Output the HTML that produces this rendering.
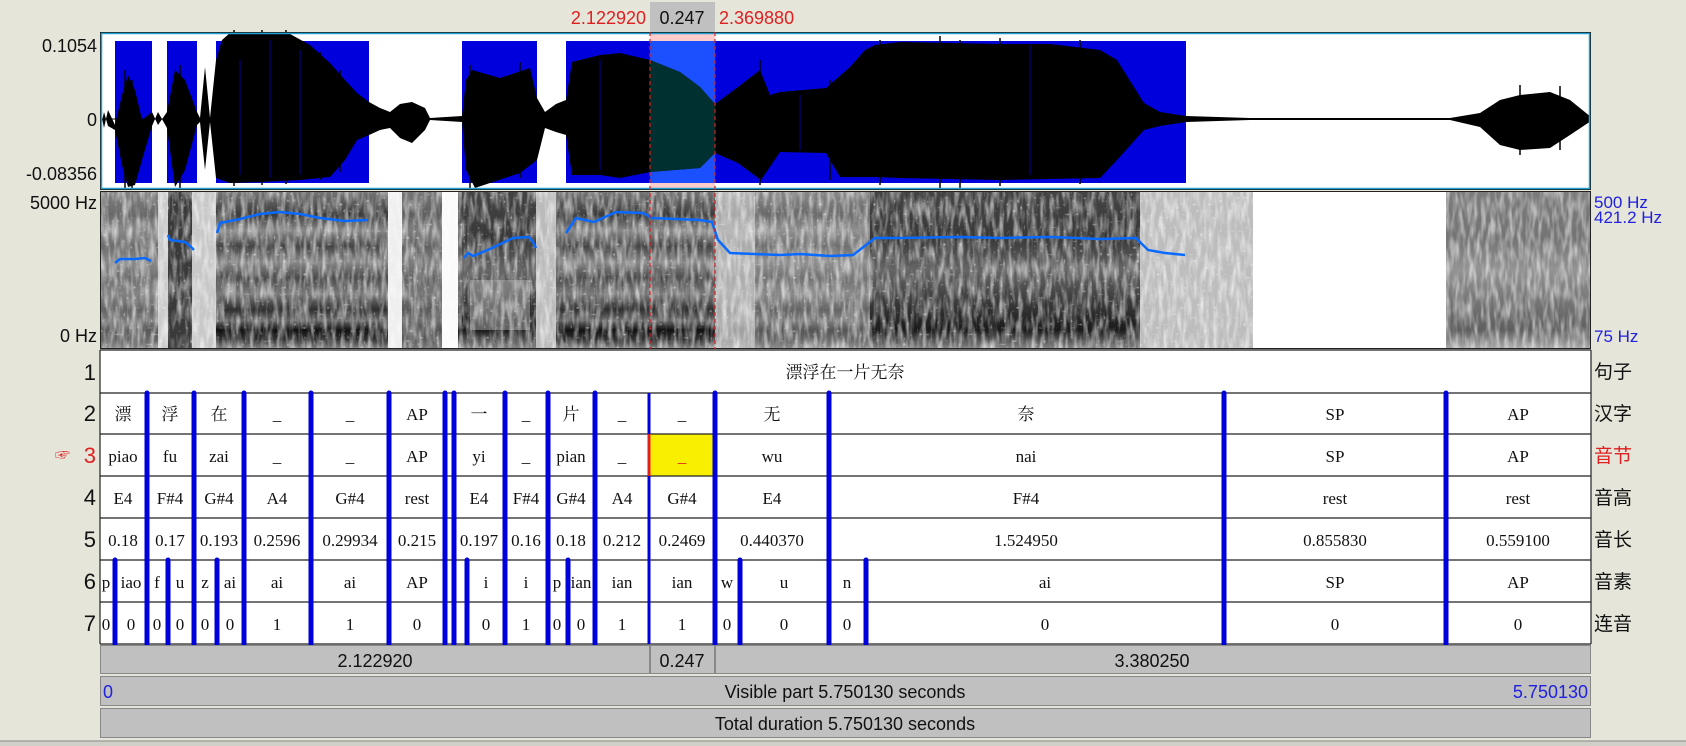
<!DOCTYPE html>
<html><head><meta charset="utf-8"><style>
html,body{margin:0;padding:0;background:#e5e5da;width:1686px;height:746px;overflow:hidden}
svg{display:block}
.s{font-family:"Liberation Sans","Noto Sans CJK SC",sans-serif}
.t{font-family:"Liberation Serif","Noto Serif CJK SC",serif;font-size:17px}
</style></head><body>
<svg width="1686" height="746" viewBox="0 0 1686 746" xmlns="http://www.w3.org/2000/svg">
<defs>
<filter id="n" x="0" y="0" width="100%" height="100%">
<feTurbulence type="fractalNoise" baseFrequency="0.22 0.05" numOctaves="2" seed="3"/>
<feColorMatrix type="matrix" values="0 0 0 0 1  0 0 0 0 1  0 0 0 0 1  0 0 0 2.2 -0.85"/>
</filter>
<filter id="d" x="0" y="0" width="100%" height="100%">
<feTurbulence type="fractalNoise" baseFrequency="0.3 0.3" numOctaves="1" seed="7"/>
<feColorMatrix type="matrix" values="0 0 0 0 1  0 0 0 0 1  0 0 0 0 1  0 0 0 4 -2.6"/>
</filter>
<linearGradient id="bands" x1="0" y1="0" x2="0" y2="1">
<stop offset="0" stop-color="#777"/><stop offset="0.15" stop-color="#3a3a3a"/><stop offset="0.25" stop-color="#888"/>
<stop offset="0.35" stop-color="#444"/><stop offset="0.45" stop-color="#888"/><stop offset="0.55" stop-color="#4a4a4a"/>
<stop offset="0.65" stop-color="#7a7a7a"/><stop offset="0.75" stop-color="#2f2f2f"/><stop offset="0.82" stop-color="#666"/>
<stop offset="0.88" stop-color="#111"/><stop offset="0.94" stop-color="#333"/><stop offset="1" stop-color="#888"/>
</linearGradient>
<linearGradient id="bands2" x1="0" y1="0" x2="0" y2="1">
<stop offset="0" stop-color="#444"/><stop offset="0.3" stop-color="#383838"/><stop offset="0.5" stop-color="#666"/>
<stop offset="0.7" stop-color="#3a3a3a"/><stop offset="0.88" stop-color="#1a1a1a"/><stop offset="1" stop-color="#888"/>
</linearGradient>
<clipPath id="sel"><rect x="650" y="32" width="65" height="158"/></clipPath>
</defs>

<rect x="650" y="2" width="65" height="30" fill="#c0c0c0"/>
<text x="646" y="24" text-anchor="end" class="s" font-size="18" fill="#e02020">2.122920</text>
<text x="682" y="24" text-anchor="middle" class="s" font-size="18" fill="#111">0.247</text>
<text x="719" y="24" class="s" font-size="18" fill="#e02020">2.369880</text>

<rect x="100" y="32" width="1491" height="158" fill="#fff"/>
<rect x="650" y="32" width="65" height="158" fill="#ffcccc"/>
<g fill="#0000dd">
<rect x="115" y="41" width="37" height="142"/><rect x="167" y="41" width="30" height="142"/>
<rect x="216" y="41" width="153" height="142"/><rect x="462" y="41" width="75" height="142"/>
<rect x="566" y="41" width="620" height="142"/>
</g>
<rect x="650" y="41" width="65" height="142" fill="#1a50ff"/>
<line x1="100" y1="119" x2="1591" y2="119" stroke="#000" stroke-width="1"/>
<g fill="#000">
<polygon points="100,108 104,128 108,110 115,125 122,95 128,75 135,90 142,120 152,112 158,125 167,112 175,70 185,80 197,112 200,118 205,67 210,118 216,60 222,40 230,33 260,32 290,34 310,45 330,63 345,80 357,93 369,102 380,108 390,112 400,104 412,102 425,108 430,118 462,116 466,80 472,70 500,78 530,68 537,98 545,112 556,104 566,100 572,62 600,55 620,53 650,60 680,72 700,87 715,104 738,87 760,70 770,95 780,92 826,88 850,67 865,50 875,45 900,42 1000,44 1050,44 1100,50 1117,60 1144,103 1160,112 1186,116 1250,118 1450,118 1480,113 1500,100 1520,95 1550,92 1570,100 1591,117 1591,121 1570,135 1550,148 1520,150 1500,145 1480,127 1450,120 1250,120 1186,122 1160,126 1144,130 1117,160 1100,178 1000,180 900,178 875,177 850,177 840,177 826,153 780,152 761,180 738,163 715,153 700,168 650,172 620,178 600,175 572,175 566,135 556,132 545,128 537,160 520,173 475,188 466,170 462,122 430,120 425,130 412,143 400,138 390,128 380,130 369,135 357,140 345,160 330,177 300,180 260,182 230,183 216,178 210,122 205,170 200,122 197,125 185,170 175,187 167,128 158,112 152,126 142,160 135,185 128,187 122,165 115,130 108,126 104,112 100,130"/>
</g>
<g stroke="#000" stroke-width="1.5">
<line x1="125" y1="70" x2="125" y2="190"/><line x1="132" y1="80" x2="132" y2="188"/><line x1="180" y1="65" x2="180" y2="190"/>
<line x1="234" y1="30" x2="234" y2="186"/><line x1="262" y1="30" x2="262" y2="185"/><line x1="286" y1="30" x2="286" y2="184"/>
<line x1="320" y1="52" x2="320" y2="180"/><line x1="340" y1="70" x2="340" y2="172"/><line x1="470" y1="65" x2="470" y2="190"/>
<line x1="520" y1="62" x2="520" y2="178"/><line x1="760" y1="60" x2="760" y2="185"/><line x1="830" y1="80" x2="830" y2="180"/>
<line x1="880" y1="40" x2="880" y2="185"/><line x1="940" y1="36" x2="940" y2="190"/><line x1="960" y1="40" x2="960" y2="188"/>
<line x1="1000" y1="38" x2="1000" y2="186"/><line x1="1080" y1="40" x2="1080" y2="184"/><line x1="1520" y1="85" x2="1520" y2="155"/><line x1="1560" y1="86" x2="1560" y2="150"/>
</g>
<g clip-path="url(#sel)"><polygon fill="#003030" points="650,60 680,72 700,87 715,104 715,153 700,168 650,172"/></g>
<g stroke="#0000dd" stroke-width="1" opacity="0.7">
<line x1="240" y1="60" x2="240" y2="175"/><line x1="270" y1="40" x2="270" y2="178"/><line x1="300" y1="50" x2="300" y2="175"/>
<line x1="600" y1="60" x2="600" y2="170"/><line x1="800" y1="95" x2="800" y2="150"/><line x1="1030" y1="45" x2="1030" y2="175"/>
</g>
<rect x="100.5" y="32.5" width="1490" height="157" fill="none" stroke="#1a1a1a" stroke-width="1"/>
<rect x="101.5" y="33.5" width="1488" height="155" fill="none" stroke="#20a0d0" stroke-width="1.5"/>

<rect x="100" y="191" width="1491" height="158" fill="#fff"/>
<rect x="100" y="191" width="1153" height="158" fill="url(#bands)"/>
<rect x="100" y="191" width="60" height="158" fill="#888" opacity="0.6"/>
<rect x="158" y="191" width="10" height="158" fill="#ccc"/>
<rect x="168" y="191" width="24" height="158" fill="#3a3a3a"/>
<rect x="192" y="191" width="24" height="158" fill="#c8c8c8"/>
<rect x="388" y="191" width="14" height="158" fill="#eee"/>
<rect x="402" y="191" width="40" height="158" fill="#777" opacity="0.6"/>
<rect x="442" y="191" width="16" height="158" fill="#fafafa"/>
<rect x="462" y="191" width="75" height="158" fill="url(#bands2)"/>
<rect x="470" y="280" width="60" height="50" fill="#aaa" opacity="0.5"/>
<rect x="536" y="191" width="20" height="158" fill="#bbb"/>
<rect x="715" y="191" width="40" height="158" fill="#c4c4c4" opacity="0.8"/>
<rect x="755" y="191" width="115" height="158" fill="#999" opacity="0.5"/>
<rect x="870" y="191" width="270" height="158" fill="url(#bands2)"/>
<rect x="1140" y="191" width="113" height="158" fill="#bdbdbd"/>
<rect x="1446" y="191" width="145" height="158" fill="url(#bands2)" opacity="0.7"/>
<rect x="100" y="191" width="1153" height="158" filter="url(#n)" opacity="0.6"/>
<rect x="100" y="191" width="1153" height="158" filter="url(#d)" opacity="0.7"/>
<rect x="1446" y="191" width="145" height="158" filter="url(#n)" opacity="0.6"/>
<g fill="none" stroke="#0a6aff" stroke-width="2.5">
<polyline points="115,263 120,259 135,259 145,258 151,261"/>
<polyline points="168,235 170,240 185,242 190,246 194,250"/>
<polyline points="217,233 220,223 240,219 260,214 280,212 300,214 320,218 345,221 368,220"/>
<polyline points="464,258 468,253 473,256 490,249 513,238 529,237 533,242 536,248"/>
<polyline points="566,233 576,218 594,222 616,212 643,213 652,218 700,220 712,222 718,240 730,253 780,255 800,254 830,256 853,255 875,238 900,238 960,237 1000,238 1050,237 1100,239 1136,238 1148,250 1165,253 1185,255"/>
</g>
<rect x="100.5" y="191.5" width="1490" height="157" fill="none" stroke="#222" stroke-width="1"/>
<g stroke="#d02020" stroke-width="1.2" stroke-dasharray="4,3">
<line x1="650" y1="32" x2="650" y2="349"/><line x1="715" y1="32" x2="715" y2="349"/>
</g>

<g class="s" font-size="18" fill="#111" text-anchor="end">
<text x="97" y="52">0.1054</text><text x="97" y="126">0</text><text x="97" y="180">-0.08356</text>
<text x="97" y="209">5000 Hz</text><text x="97" y="342">0 Hz</text>
</g>
<g class="s" font-size="17" fill="#2020e0">
<text x="1594" y="208">500 Hz</text><text x="1594" y="223">421.2 Hz</text><text x="1594" y="342">75 Hz</text>
</g>
<g class="s" font-size="22" fill="#111" text-anchor="end">
<text x="96" y="380">1</text><text x="96" y="421">2</text><text x="96" y="463" fill="#e02020">3</text>
<text x="96" y="505">4</text><text x="96" y="547">5</text><text x="96" y="589">6</text><text x="96" y="631">7</text>
</g>
<text x="55" y="460" class="s" font-size="15" fill="#e02020">☞</text>
<g class="s" font-size="19" fill="#111">
<text x="1594" y="378">句子</text><text x="1594" y="420">汉字</text><text x="1594" y="462" fill="#e02020">音节</text>
<text x="1594" y="504">音高</text><text x="1594" y="546">音长</text><text x="1594" y="588">音素</text><text x="1594" y="630">连音</text>
</g>

<rect x="100" y="350" width="1491" height="294" fill="#fff"/>
<rect x="650" y="434" width="65" height="42" fill="#f8f000"/>
<g stroke="#222" stroke-width="1.2">
<line x1="100" y1="350" x2="1591" y2="350"/><line x1="100" y1="393" x2="1591" y2="393"/><line x1="100" y1="434" x2="1591" y2="434"/>
<line x1="100" y1="476" x2="1591" y2="476"/><line x1="100" y1="518" x2="1591" y2="518"/><line x1="100" y1="560" x2="1591" y2="560"/>
<line x1="100" y1="602" x2="1591" y2="602"/><line x1="100" y1="644" x2="1591" y2="644"/>
<line x1="100" y1="350" x2="100" y2="644"/><line x1="1591" y1="350" x2="1591" y2="644"/>
</g>
<g stroke="#0000dd" stroke-width="5" stroke-linecap="round">
<line x1="147" y1="393" x2="147" y2="644"/><line x1="194" y1="393" x2="194" y2="644"/><line x1="244" y1="393" x2="244" y2="644"/>
<line x1="311" y1="393" x2="311" y2="644"/><line x1="389" y1="393" x2="389" y2="644"/><line x1="445" y1="393" x2="445" y2="644"/>
<line x1="454" y1="393" x2="454" y2="644"/><line x1="505" y1="393" x2="505" y2="644"/><line x1="548" y1="393" x2="548" y2="644"/>
<line x1="595" y1="393" x2="595" y2="644"/><line x1="715" y1="393" x2="715" y2="644"/><line x1="829" y1="393" x2="829" y2="644"/>
<line x1="1224" y1="393" x2="1224" y2="644"/><line x1="1446" y1="393" x2="1446" y2="644"/>
<line x1="115" y1="560" x2="115" y2="644"/><line x1="168" y1="560" x2="168" y2="644"/><line x1="217" y1="560" x2="217" y2="644"/>
<line x1="467" y1="560" x2="467" y2="644"/><line x1="568" y1="560" x2="568" y2="644"/><line x1="740" y1="560" x2="740" y2="644"/>
<line x1="866" y1="560" x2="866" y2="644"/>
</g>
<line x1="649" y1="393" x2="649" y2="644" stroke="#0000dd" stroke-width="3"/>
<line x1="649" y1="434" x2="649" y2="476" stroke="#e02020" stroke-width="3"/>

<g class="t" fill="#111" text-anchor="middle">
<text x="845" y="378">漂浮在一片无奈</text>
<text x="123" y="420">漂</text><text x="170" y="420">浮</text><text x="219" y="420">在</text><text x="277" y="420">_</text><text x="350" y="420">_</text>
<text x="417" y="420">AP</text><text x="479" y="420">一</text><text x="526" y="420">_</text><text x="571" y="420">片</text><text x="622" y="420">_</text>
<text x="682" y="420">_</text><text x="772" y="420">无</text><text x="1026" y="420">奈</text><text x="1335" y="420">SP</text><text x="1518" y="420">AP</text>
<text x="123" y="462">piao</text><text x="170" y="462">fu</text><text x="219" y="462">zai</text><text x="277" y="462">_</text><text x="350" y="462">_</text>
<text x="417" y="462">AP</text><text x="479" y="462">yi</text><text x="526" y="462">_</text><text x="571" y="462">pian</text><text x="622" y="462">_</text>
<text x="682" y="462" fill="#e02020">_</text><text x="772" y="462">wu</text><text x="1026" y="462">nai</text><text x="1335" y="462">SP</text><text x="1518" y="462">AP</text>
<text x="123" y="504">E4</text><text x="170" y="504">F#4</text><text x="219" y="504">G#4</text><text x="277" y="504">A4</text><text x="350" y="504">G#4</text>
<text x="417" y="504">rest</text><text x="479" y="504">E4</text><text x="526" y="504">F#4</text><text x="571" y="504">G#4</text><text x="622" y="504">A4</text>
<text x="682" y="504">G#4</text><text x="772" y="504">E4</text><text x="1026" y="504">F#4</text><text x="1335" y="504">rest</text><text x="1518" y="504">rest</text>
<text x="123" y="546">0.18</text><text x="170" y="546">0.17</text><text x="219" y="546">0.193</text><text x="277" y="546">0.2596</text><text x="350" y="546">0.29934</text>
<text x="417" y="546">0.215</text><text x="479" y="546">0.197</text><text x="526" y="546">0.16</text><text x="571" y="546">0.18</text><text x="622" y="546">0.212</text>
<text x="682" y="546">0.2469</text><text x="772" y="546">0.440370</text><text x="1026" y="546">1.524950</text><text x="1335" y="546">0.855830</text><text x="1518" y="546">0.559100</text>
<text x="106" y="588">p</text><text x="131" y="588">iao</text><text x="157" y="588">f</text><text x="180" y="588">u</text><text x="205" y="588">z</text><text x="230" y="588">ai</text>
<text x="277" y="588">ai</text><text x="350" y="588">ai</text><text x="417" y="588">AP</text><text x="486" y="588">i</text><text x="526" y="588">i</text>
<text x="557" y="588">p</text><text x="581" y="588">ian</text><text x="622" y="588">ian</text><text x="682" y="588">ian</text><text x="727" y="588">w</text>
<text x="784" y="588">u</text><text x="847" y="588">n</text><text x="1045" y="588">ai</text><text x="1335" y="588">SP</text><text x="1518" y="588">AP</text>
<text x="106" y="630">0</text><text x="131" y="630">0</text><text x="157" y="630">0</text><text x="180" y="630">0</text><text x="205" y="630">0</text><text x="230" y="630">0</text>
<text x="277" y="630">1</text><text x="350" y="630">1</text><text x="417" y="630">0</text><text x="486" y="630">0</text><text x="526" y="630">1</text>
<text x="557" y="630">0</text><text x="581" y="630">0</text><text x="622" y="630">1</text><text x="682" y="630">1</text><text x="727" y="630">0</text>
<text x="784" y="630">0</text><text x="847" y="630">0</text><text x="1045" y="630">0</text><text x="1335" y="630">0</text><text x="1518" y="630">0</text>
</g>

<g fill="#c0c0c0" stroke="#888" stroke-width="1">
<rect x="100.5" y="645.5" width="549" height="28"/><rect x="650.5" y="645.5" width="64" height="28"/><rect x="715.5" y="645.5" width="875" height="28"/>
<rect x="100.5" y="676.5" width="1490" height="29"/><rect x="100.5" y="708.5" width="1490" height="29"/>
</g>
<g class="s" font-size="18" fill="#111" text-anchor="middle">
<text x="375" y="667">2.122920</text><text x="682" y="667">0.247</text><text x="1152" y="667">3.380250</text>
<text x="845" y="698">Visible part 5.750130 seconds</text><text x="845" y="730">Total duration 5.750130 seconds</text>
</g>
<text x="103" y="698" class="s" font-size="18" fill="#2020e0">0</text>
<text x="1588" y="698" text-anchor="end" class="s" font-size="18" fill="#2020e0">5.750130</text>
<rect x="0" y="741" width="1686" height="5" fill="#d0d0c8"/>
<line x1="0" y1="741" x2="1686" y2="741" stroke="#888"/>
</svg>
</body></html>
